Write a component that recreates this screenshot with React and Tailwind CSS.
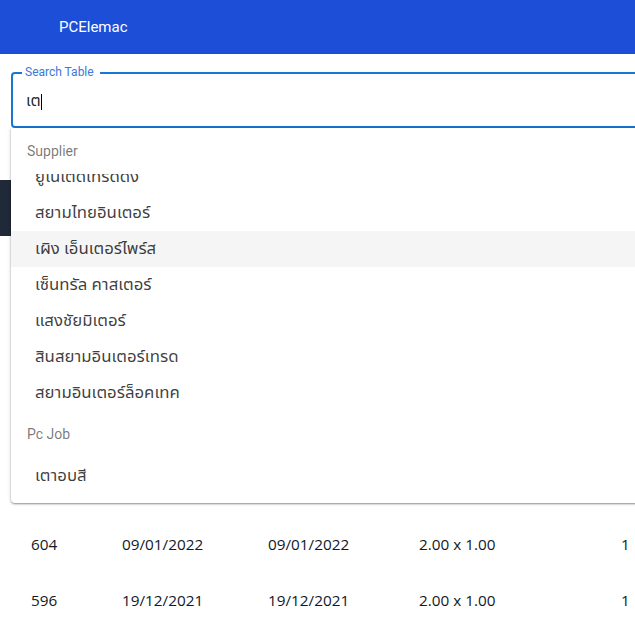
import React from "react";

const thai = "font-['Roboto','Noto_Sans','Noto_Sans_Thai','DejaVu_Sans',sans-serif]";

const suppliers = [
  "ยูไนเต็ดเทรดดิ้ง",
  "สยามไทยอินเตอร์",
  "เผิง เอ็นเตอร์ไพร์ส",
  "เซ็นทรัล คาสเตอร์",
  "แสงชัยมิเตอร์",
  "สินสยามอินเตอร์เทรด",
  "สยามอินเตอร์ล็อคเทค",
];

const rows = [
  { id: 604, start: "09/01/2022", end: "09/01/2022", size: "2.00 x 1.00", qty: 1 },
  { id: 596, start: "19/12/2021", end: "19/12/2021", size: "2.00 x 1.00", qty: 1 },
];

function Option({ label, active }) {
  return (
    <div className={`h-9 shrink-0 pl-6 flex items-center text-[16.8px] text-[#000000c4] ${thai} ${active ? "bg-[#f5f5f5]" : ""}`}>
      {label}
    </div>
  );
}

export default function App() {
  return (
    <div className="w-[635px] h-[634px] overflow-hidden bg-white relative">
      <header className="h-[54px] bg-[#1d4ed8] flex items-center pl-[59px] text-white text-[15px] font-['Roboto',sans-serif]">
        PCElemac
      </header>

      <div className="w-[900px] pl-[11px] pt-[18px] relative">
        {/* Search box with its dropdown */}
        <div className="relative h-14 border-2 border-[#1976d2] rounded flex items-center pl-[13px]">
          <span className="absolute left-[9px] -top-[9px] px-[3px] pr-[6px] bg-white text-xs leading-[14px] text-[#3b78d8] font-['Roboto',sans-serif]">
            Search Table
          </span>
          <span className={`pt-[1px] text-base text-[#000000de] ${thai}`}>เต</span>
          <span className="w-px h-4 mt-[4px] bg-black" />
        </div>

        <div className="absolute z-10 left-[11px] top-[74px] w-[889px] h-[375px] bg-white rounded-b shadow-[0_1px_2px_rgba(0,0,0,0.4),0_0_5px_rgba(0,0,0,0.1)] overflow-hidden flex flex-col">
          <div className="relative z-10 h-[46px] shrink-0 bg-white pl-4 flex items-center text-sm text-[#0000008a] font-['Roboto',sans-serif]">
            Supplier
          </div>
          {/* list is scrolled, first option sits partly under the group label */}
          <div className="-mt-[15px] flex flex-col">
            {suppliers.map((s, i) => (
              <Option key={s} label={s} active={i === 2} />
            ))}
          </div>
          <div className="h-[47px] shrink-0 pl-4 flex items-center pb-[2px] text-sm text-[#0000008a] font-['Roboto',sans-serif]">
            Pc Job
          </div>
          <Option label="เตาอบสี" />
        </div>
      </div>

      {/* Table, mostly covered by the dropdown */}
      <div className="w-[900px] mt-[52px]">
        <div className="h-14 bg-[#1f2937]" />
        <div className="h-[280px]" />
        {rows.map((r) => (
          <div key={r.id} className="h-14 flex items-center text-[15.3px] text-[#111827] font-['Open_Sans',sans-serif]">
            <div className="w-[122px] pl-[31px]">{r.id}</div>
            <div className="w-[146px]">{r.start}</div>
            <div className="w-[151px]">{r.end}</div>
            <div className="w-[202px]">{r.size}</div>
            <div>{r.qty}</div>
          </div>
        ))}
      </div>
    </div>
  );
}
